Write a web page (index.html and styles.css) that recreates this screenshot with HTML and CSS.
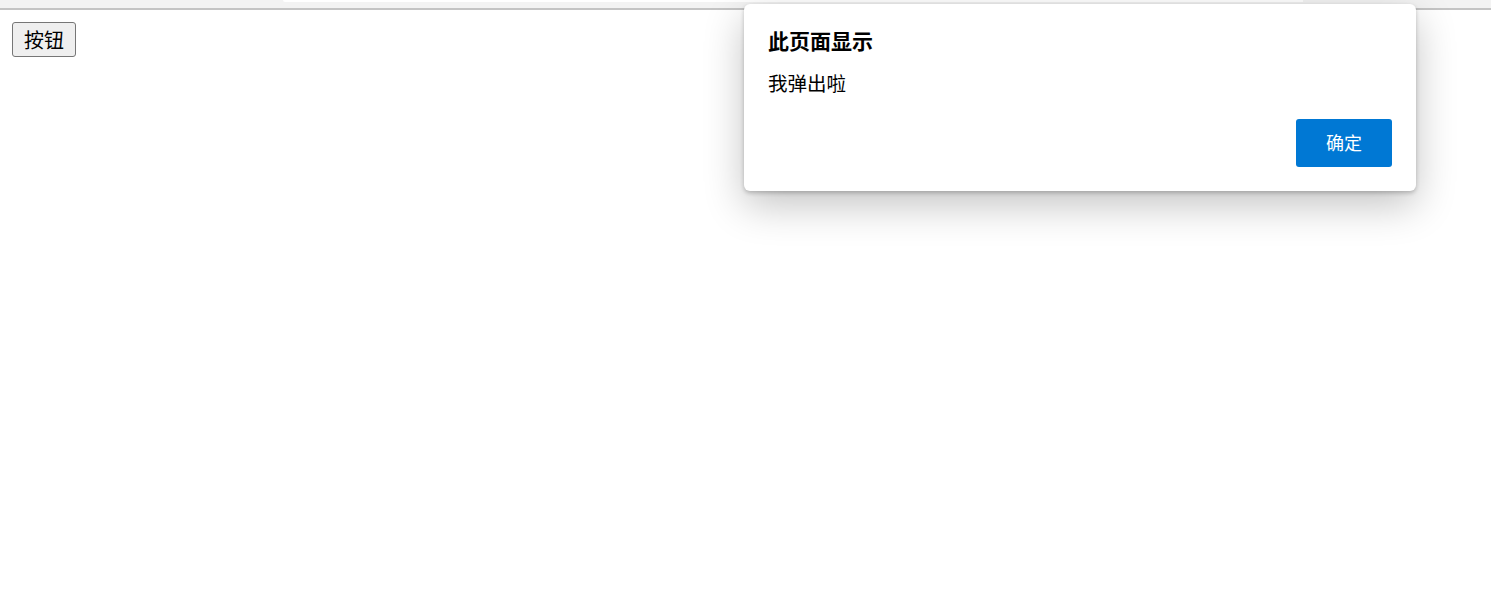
FILE: index.html
```html
<!DOCTYPE html>
<html lang="zh-CN">
<head>
<meta charset="utf-8">
<title>弹窗</title>
<link rel="stylesheet" href="styles.css">
</head>
<body>
<div class="chrome"><div class="tab-edge"></div></div>
<main class="page">
  <button class="btn" type="button">按钮</button>
</main>
<div class="dialog" role="alertdialog">
  <div class="dialog-title">此页面显示</div>
  <div class="dialog-msg">我弹出啦</div>
  <div class="dialog-actions">
    <button class="ok" type="button">确定</button>
  </div>
</div>
</body>
</html>
```

FILE: styles.css
```css
html, body {
  margin: 0;
  padding: 0;
  background: #ffffff;
  font-family: "Noto Sans CJK SC", "Noto Sans", sans-serif;
  color: #000;
}

.chrome {
  height: 8px;
  background: #f3f3f3;
  border-bottom: 2px solid #c4c4c4;
  position: relative;
}

.tab-edge {
  margin-left: 283px;
  width: 1020px;
  height: 2px;
  background: #ffffff;
  border-bottom-left-radius: 4px;
}

.page {
  padding: 12px 0 0 12px;
}

.btn {
  box-sizing: border-box;
  height: 35px;
  padding: 0 11px;
  font-family: "Noto Sans CJK SC", sans-serif;
  font-size: 20px;
  line-height: 33px;
  color: #000;
  background: #efefef;
  border: 1px solid #767676;
  border-radius: 3px;
}

.dialog {
  position: absolute;
  left: 744px;
  top: 4px;
  width: 672px;
  box-sizing: border-box;
  padding: 24px;
  background: #ffffff;
  border-radius: 6px;
  box-shadow: 0 2px 4px rgba(0, 0, 0, 0.22), 0 14px 40px rgba(0, 0, 0, 0.24);
}

.dialog-title {
  font-size: 21px;
  font-weight: 700;
  line-height: 24px;
}

.dialog-msg {
  margin-top: 18px;
  font-size: 19.5px;
  line-height: 26px;
}

.dialog-actions {
  display: flex;
  justify-content: flex-end;
  margin-top: 23px;
}

.ok {
  width: 96px;
  height: 48px;
  padding: 0 0 2px;
  border: none;
  border-radius: 3px;
  background: #0078d4;
  color: #ffffff;
  font-family: "Noto Sans CJK SC", sans-serif;
  font-size: 18px;
  line-height: 46px;
}
```
